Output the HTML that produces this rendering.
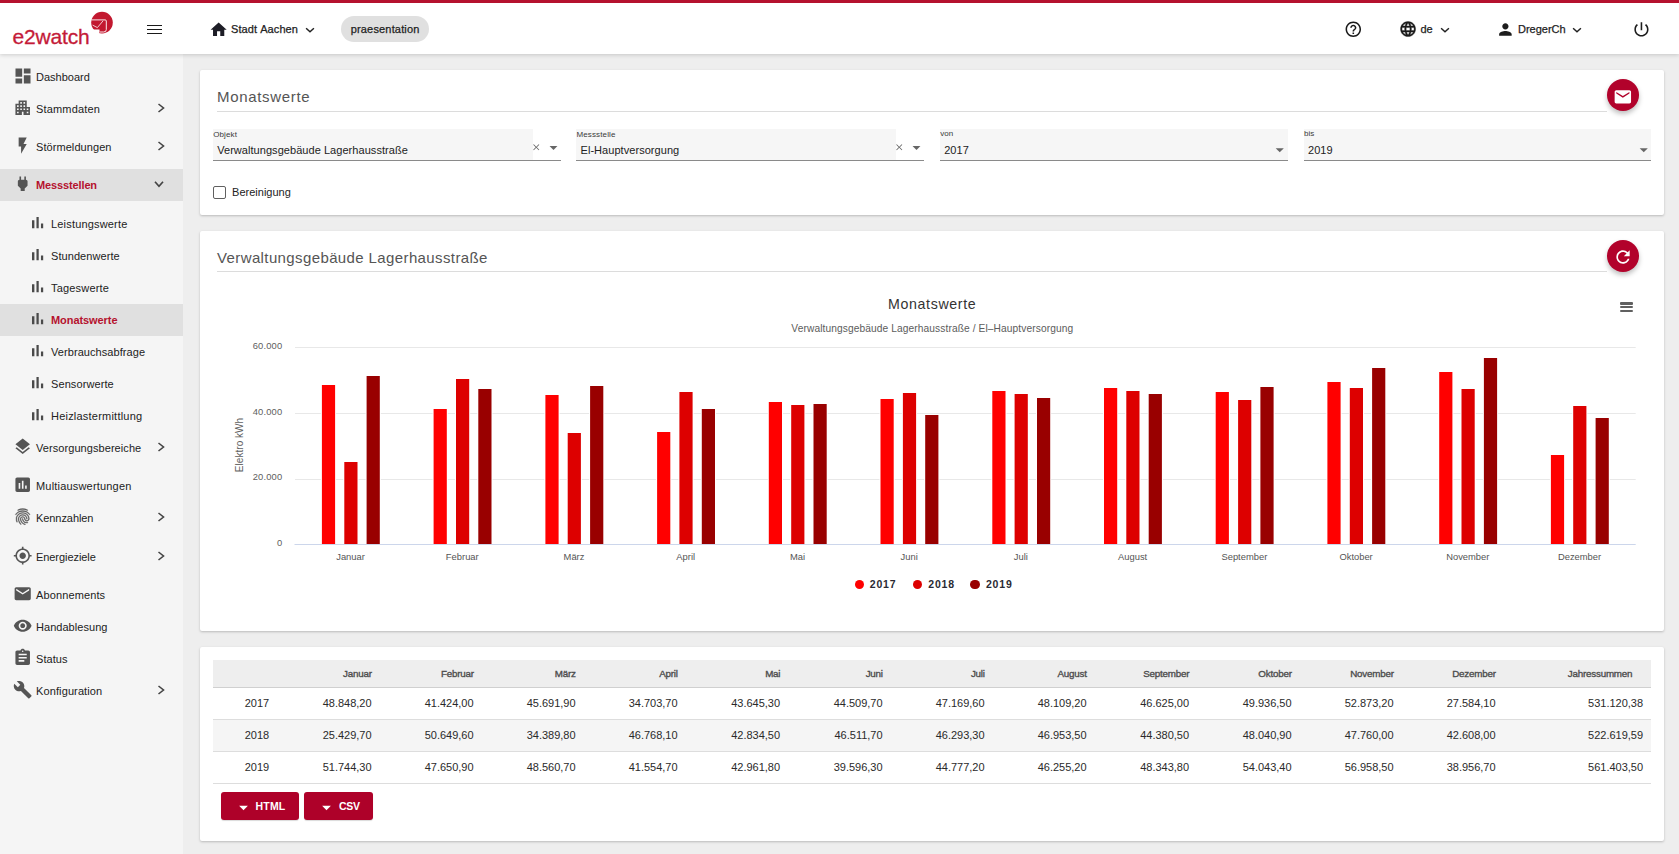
<!DOCTYPE html><html><head><meta charset="utf-8"><title>e2watch</title><style>
*{box-sizing:border-box;margin:0;padding:0}
html,body{width:1679px;height:854px;overflow:hidden;background:#eeeeee;font-family:"Liberation Sans",sans-serif;}
body{position:relative}
.ic{position:absolute;display:block;overflow:visible}
.abs{position:absolute}
/* .t: text whose baseline sits at "top" (line-height 0 trick) */
.t{position:absolute;white-space:nowrap;line-height:0;height:0;font-size:11px;color:#222}
.m{-webkit-text-stroke:0.25px currentColor}
.card{position:absolute;background:#fff;border-radius:2px;box-shadow:0 1px 3px rgba(0,0,0,.16),0 1px 2px rgba(0,0,0,.07)}
</style></head><body>
<div class="abs" style="left:0;top:54px;width:183.1px;height:800px;background:#f5f5f5"></div>
<div class="abs" style="left:0;top:169.3px;width:183.1px;height:31.4px;background:#e0e0e0"></div>
<div class="abs" style="left:0;top:304.3px;width:183.1px;height:31.4px;background:#e0e0e0"></div>
<svg class="ic" style="left:12.50px;top:65.50px;width:20.00px;height:20.00px;" viewBox="0 0 24 24"><path fill="#555555" d="M3 13h8V3H3v10zm0 8h8v-6H3v6zm10 0h8V11h-8v10zm0-18v6h8V3h-8z"/></svg>
<div class="t " style="left:36.00px;top:77.09px;font-size:11px;letter-spacing:0.000px;">Dashboard</div>
<svg class="ic" style="left:12.80px;top:97.80px;width:19.40px;height:19.40px;" viewBox="0 0 24 24"><path fill="#555555" d="M17 11V3H7v4H3v14h8v-4h2v4h8V11h-4zM7 19H5v-2h2v2zm0-4H5v-2h2v2zm0-4H5V9h2v2zm4 4H9v-2h2v2zm0-4H9V9h2v2zm0-4H9V5h2v2zm4 8h-2v-2h2v2zm0-4h-2V9h2v2zm0-4h-2V5h2v2zm4 12h-2v-2h2v2zm0-4h-2v-2h2v2z"/></svg>
<div class="t " style="left:36.00px;top:109.09px;font-size:11px;letter-spacing:0.160px;">Stammdaten</div>
<svg class="ic" style="left:152.80px;top:99.50px;width:16px;height:16px" viewBox="-8 -8 16 16"><path d="M-2.50 -4.00L2.50 0L-2.50 4.00" fill="none" stroke="#444" stroke-width="1.60"/></svg>
<svg class="ic" style="left:12.80px;top:135.80px;width:19.40px;height:19.40px;" viewBox="0 0 24 24"><path fill="#555555" d="M7 2v11h3v9l7-12h-4l4-8z"/></svg>
<div class="t " style="left:36.00px;top:147.09px;font-size:11px;letter-spacing:0.069px;">Störmeldungen</div>
<svg class="ic" style="left:152.80px;top:137.50px;width:16px;height:16px" viewBox="-8 -8 16 16"><path d="M-2.50 -4.00L2.50 0L-2.50 4.00" fill="none" stroke="#444" stroke-width="1.60"/></svg>
<svg class="ic" style="left:12.80px;top:173.80px;width:19.40px;height:19.40px;" viewBox="0 0 24 24"><path fill="#555555" d="M16.01 7L16 3h-2v4h-4V3H8v4h-.01C7 6.99 6 7.99 6 8.99v5.49L9.5 18v3h5v-3l3.5-3.51v-5.5c0-1-1-2-1.99-1.99z"/></svg>
<div class="t " style="left:36.00px;top:185.09px;font-size:11px;letter-spacing:-0.127px;font-weight:bold;color:#b5122e">Messstellen</div>
<svg class="ic" style="left:151.40px;top:175.60px;width:16px;height:16px" viewBox="-8 -8 16 16"><path d="M-4.00 -2.20L0 2.20L4.00 -2.20" fill="none" stroke="#444" stroke-width="1.70"/></svg>
<svg class="ic" style="left:12.80px;top:436.80px;width:19.40px;height:19.40px;" viewBox="0 0 24 24"><path fill="#555555" d="M11.99 18.54l-7.37-5.73L3 14.07l9 7 9-7-1.63-1.27-7.38 5.74zM12 16l7.36-5.73L21 9l-9-7-9 7 1.63 1.27L12 16z"/></svg>
<div class="t " style="left:36.00px;top:448.09px;font-size:11px;letter-spacing:0.068px;">Versorgungsbereiche</div>
<svg class="ic" style="left:152.80px;top:438.50px;width:16px;height:16px" viewBox="-8 -8 16 16"><path d="M-2.50 -4.00L2.50 0L-2.50 4.00" fill="none" stroke="#444" stroke-width="1.60"/></svg>
<svg class="ic" style="left:12.80px;top:474.80px;width:19.40px;height:19.40px;" viewBox="0 0 24 24"><path fill="#555555" d="M19 3H5c-1.1 0-2 .9-2 2v14c0 1.1.9 2 2 2h14c1.1 0 2-.9 2-2V5c0-1.1-.9-2-2-2zM9 17H7v-7h2v7zm4 0h-2V7h2v10zm4 0h-2v-4h2v4z"/></svg>
<div class="t " style="left:36.00px;top:486.09px;font-size:11px;letter-spacing:0.188px;">Multiauswertungen</div>
<svg class="ic" style="left:12.80px;top:506.80px;width:19.40px;height:19.40px;stroke:#555;stroke-width:.45px" viewBox="0 0 24 24"><path fill="#555555" d="M17.81 4.47c-.08 0-.16-.02-.23-.06C15.66 3.42 14 3 12.01 3c-1.98 0-3.86.47-5.57 1.41-.24.13-.54.04-.68-.2-.13-.24-.04-.55.2-.68C7.82 2.52 9.86 2 12.01 2c2.13 0 3.99.47 6.03 1.52.25.13.34.43.21.67-.09.18-.26.28-.44.28zM3.5 9.72c-.1 0-.2-.03-.29-.09-.23-.16-.28-.47-.12-.7.99-1.4 2.25-2.5 3.75-3.27C9.98 4.04 14 4.03 17.15 5.65c1.5.77 2.76 1.86 3.75 3.25.16.22.11.54-.12.7-.23.16-.54.11-.7-.12-.9-1.26-2.04-2.25-3.39-2.94-2.87-1.47-6.54-1.47-9.4.01-1.36.7-2.5 1.7-3.4 2.96-.08.14-.23.21-.39.21zm6.25 12.07c-.13 0-.26-.05-.35-.15-.87-.87-1.34-1.43-2.01-2.64-.69-1.23-1.05-2.73-1.05-4.34 0-2.97 2.54-5.39 5.66-5.39s5.66 2.42 5.66 5.39c0 .28-.22.5-.5.5s-.5-.22-.5-.5c0-2.42-2.09-4.39-4.66-4.39-2.57 0-4.66 1.97-4.66 4.39 0 1.44.32 2.77.93 3.85.64 1.15 1.08 1.64 1.85 2.42.19.2.19.51 0 .71-.11.1-.24.15-.37.15zm7.17-1.85c-1.19 0-2.24-.3-3.1-.89-1.49-1.01-2.38-2.65-2.38-4.39 0-.28.22-.5.5-.5s.5.22.5.5c0 1.41.72 2.74 1.94 3.56.71.48 1.54.71 2.54.71.24 0 .64-.03 1.04-.1.27-.05.53.13.58.41.05.27-.13.53-.41.58-.57.11-1.07.12-1.21.12zM14.91 22c-.04 0-.09-.01-.13-.02-1.59-.44-2.63-1.03-3.72-2.1-1.4-1.39-2.17-3.24-2.17-5.22 0-1.62 1.38-2.94 3.08-2.94 1.7 0 3.08 1.32 3.08 2.94 0 1.07.93 1.94 2.08 1.94s2.08-.87 2.08-1.94c0-3.77-3.25-6.83-7.25-6.83-2.84 0-5.44 1.58-6.61 4.03-.39.81-.59 1.76-.59 2.8 0 .78.07 2.01.67 3.61.1.26-.03.55-.29.64-.26.1-.55-.04-.64-.29-.49-1.31-.73-2.61-.73-3.96 0-1.2.23-2.29.68-3.24 1.33-2.79 4.28-4.6 7.51-4.6 4.55 0 8.25 3.51 8.25 7.83 0 1.62-1.38 2.94-3.08 2.94s-3.08-1.32-3.08-2.94c0-1.07-.93-1.94-2.08-1.94s-2.08.87-2.08 1.94c0 1.71.66 3.31 1.87 4.51.95.94 1.86 1.46 3.27 1.85.27.07.42.35.35.61-.05.23-.26.38-.47.38z"/></svg>
<div class="t " style="left:36.00px;top:518.09px;font-size:11px;letter-spacing:-0.070px;">Kennzahlen</div>
<svg class="ic" style="left:152.80px;top:508.50px;width:16px;height:16px" viewBox="-8 -8 16 16"><path d="M-2.50 -4.00L2.50 0L-2.50 4.00" fill="none" stroke="#444" stroke-width="1.60"/></svg>
<svg class="ic" style="left:12.80px;top:545.80px;width:19.40px;height:19.40px;" viewBox="0 0 24 24"><path fill="#555555" d="M12 8c-2.21 0-4 1.79-4 4s1.79 4 4 4 4-1.79 4-4-1.79-4-4-4zm8.94 3c-.46-4.17-3.77-7.48-7.94-7.94V1h-2v2.06C6.83 3.52 3.52 6.83 3.06 11H1v2h2.06c.46 4.17 3.77 7.48 7.94 7.94V23h2v-2.06c4.17-.46 7.48-3.77 7.94-7.94H23v-2h-2.06zM12 19c-3.87 0-7-3.13-7-7s3.13-7 7-7 7 3.13 7 7-3.13 7-7 7z"/></svg>
<div class="t " style="left:36.00px;top:557.09px;font-size:11px;letter-spacing:-0.067px;">Energieziele</div>
<svg class="ic" style="left:152.80px;top:547.50px;width:16px;height:16px" viewBox="-8 -8 16 16"><path d="M-2.50 -4.00L2.50 0L-2.50 4.00" fill="none" stroke="#444" stroke-width="1.60"/></svg>
<svg class="ic" style="left:12.80px;top:583.80px;width:19.40px;height:19.40px;" viewBox="0 0 24 24"><path fill="#555555" d="M20 4H4c-1.1 0-1.99.9-1.99 2L2 18c0 1.1.9 2 2 2h16c1.1 0 2-.9 2-2V6c0-1.1-.9-2-2-2zm0 4l-8 5-8-5V6l8 5 8-5v2z"/></svg>
<div class="t " style="left:36.00px;top:595.09px;font-size:11px;letter-spacing:0.118px;">Abonnements</div>
<svg class="ic" style="left:12.80px;top:615.80px;width:19.40px;height:19.40px;" viewBox="0 0 24 24"><path fill="#555555" d="M12 4.5C7 4.5 2.73 7.61 1 12c1.73 4.39 6 7.5 11 7.5s9.27-3.11 11-7.5c-1.73-4.39-6-7.5-11-7.5zM12 17c-2.76 0-5-2.24-5-5s2.24-5 5-5 5 2.24 5 5-2.24 5-5 5zm0-8c-1.66 0-3 1.34-3 3s1.34 3 3 3 3-1.34 3-3-1.34-3-3-3z"/></svg>
<div class="t " style="left:36.00px;top:627.09px;font-size:11px;letter-spacing:0.042px;">Handablesung</div>
<svg class="ic" style="left:12.80px;top:647.80px;width:19.40px;height:19.40px;" viewBox="0 0 24 24"><path fill="#555555" d="M19 3h-4.18C14.4 1.84 13.3 1 12 1c-1.3 0-2.4.84-2.82 2H5c-1.1 0-2 .9-2 2v14c0 1.1.9 2 2 2h14c1.1 0 2-.9 2-2V5c0-1.1-.9-2-2-2zm-7 0c.55 0 1 .45 1 1s-.45 1-1 1-1-.45-1-1 .45-1 1-1zm2 14H7v-2h7v2zm3-4H7v-2h10v2zm0-4H7V7h10v2z"/></svg>
<div class="t " style="left:36.00px;top:659.09px;font-size:11px;letter-spacing:0.050px;">Status</div>
<svg class="ic" style="left:12.80px;top:679.80px;width:19.40px;height:19.40px;" viewBox="0 0 24 24"><path fill="#555555" d="M22.7 19l-9.1-9.1c.9-2.3.4-5-1.5-6.9-2-2-5-2.4-7.4-1.3L9 6 6 9 1.6 4.7C.4 7.1.9 10.1 2.9 12.1c1.9 1.9 4.6 2.4 6.9 1.5l9.1 9.1c.4.4 1 .4 1.4 0l2.3-2.3c.5-.4.5-1.1.1-1.4z"/></svg>
<div class="t " style="left:36.00px;top:691.09px;font-size:11px;letter-spacing:0.115px;">Konfiguration</div>
<svg class="ic" style="left:152.80px;top:681.50px;width:16px;height:16px" viewBox="-8 -8 16 16"><path d="M-2.50 -4.00L2.50 0L-2.50 4.00" fill="none" stroke="#444" stroke-width="1.60"/></svg>
<svg class="ic" style="left:28.00px;top:212.70px;width:19.20px;height:19.20px;" viewBox="0 0 24 24"><path fill="#4a4a4a" d="M5 9.2h3V19H5zM10.6 5h2.8v14h-2.8zm5.6 8H19v6h-2.8z"/></svg>
<div class="t " style="left:51.00px;top:224.09px;font-size:11px;letter-spacing:0.179px;">Leistungswerte</div>
<svg class="ic" style="left:28.00px;top:244.70px;width:19.20px;height:19.20px;" viewBox="0 0 24 24"><path fill="#4a4a4a" d="M5 9.2h3V19H5zM10.6 5h2.8v14h-2.8zm5.6 8H19v6h-2.8z"/></svg>
<div class="t " style="left:51.00px;top:256.09px;font-size:11px;letter-spacing:0.067px;">Stundenwerte</div>
<svg class="ic" style="left:28.00px;top:276.70px;width:19.20px;height:19.20px;" viewBox="0 0 24 24"><path fill="#4a4a4a" d="M5 9.2h3V19H5zM10.6 5h2.8v14h-2.8zm5.6 8H19v6h-2.8z"/></svg>
<div class="t " style="left:51.00px;top:288.09px;font-size:11px;letter-spacing:0.190px;">Tageswerte</div>
<svg class="ic" style="left:28.00px;top:308.70px;width:19.20px;height:19.20px;" viewBox="0 0 24 24"><path fill="#4a4a4a" d="M5 9.2h3V19H5zM10.6 5h2.8v14h-2.8zm5.6 8H19v6h-2.8z"/></svg>
<div class="t " style="left:51.00px;top:320.09px;font-size:11px;letter-spacing:-0.073px;font-weight:bold;color:#b5122e">Monatswerte</div>
<svg class="ic" style="left:28.00px;top:340.70px;width:19.20px;height:19.20px;" viewBox="0 0 24 24"><path fill="#4a4a4a" d="M5 9.2h3V19H5zM10.6 5h2.8v14h-2.8zm5.6 8H19v6h-2.8z"/></svg>
<div class="t " style="left:51.00px;top:352.09px;font-size:11px;letter-spacing:0.071px;">Verbrauchsabfrage</div>
<svg class="ic" style="left:28.00px;top:372.70px;width:19.20px;height:19.20px;" viewBox="0 0 24 24"><path fill="#4a4a4a" d="M5 9.2h3V19H5zM10.6 5h2.8v14h-2.8zm5.6 8H19v6h-2.8z"/></svg>
<div class="t " style="left:51.00px;top:384.09px;font-size:11px;letter-spacing:0.091px;">Sensorwerte</div>
<svg class="ic" style="left:28.00px;top:404.70px;width:19.20px;height:19.20px;" viewBox="0 0 24 24"><path fill="#4a4a4a" d="M5 9.2h3V19H5zM10.6 5h2.8v14h-2.8zm5.6 8H19v6h-2.8z"/></svg>
<div class="t " style="left:51.00px;top:416.09px;font-size:11px;letter-spacing:0.217px;">Heizlastermittlung</div>
<div class="abs" style="left:0;top:0;width:1679px;height:54px;background:#fff;border-top:3px solid #b5122e;box-shadow:0 1px 4px rgba(0,0,0,.17)"></div>
<div class="t " style="left:12.60px;top:37.02px;font-size:21px;color:#c41a38;letter-spacing:-.2px;-webkit-text-stroke:.3px #c41a38">e2watch</div>
<svg class="ic" style="left:88px;top:8px;width:28px;height:28px" viewBox="88 8 28 28"><circle cx="102" cy="22.6" r="10.8" fill="#c2182f"/><path d="M91.3 19.9H105.2Q106.3 19.9 106.3 21V29.6Q106.3 32 103.6 32H99.8" fill="none" stroke="#fff" stroke-width="1" stroke-linecap="butt" opacity=".9"/><path d="M92.6 25.1L97.4 27.6L103.1 20.8" fill="none" stroke="#fff" stroke-width=".9" opacity=".85"/><path d="M89 29.4H99.5V32.4L97 34.5H89Z" fill="#fff"/></svg>
<div class="abs" style="left:147px;top:24.9px;width:15px;height:1.2px;background:#1a1a1a"></div>
<div class="abs" style="left:147px;top:29.1px;width:15px;height:1.2px;background:#1a1a1a"></div>
<div class="abs" style="left:147px;top:33.3px;width:15px;height:1.2px;background:#1a1a1a"></div>
<svg class="ic" style="left:208.95px;top:19.95px;width:19.30px;height:19.30px;" viewBox="0 0 24 24"><path fill="#1d1d26" d="M10 20v-6h4v6h5v-8h3L12 3 2 12h3v8z"/></svg>
<div class="t m" style="left:231.00px;top:29.09px;font-size:11px;color:#222;letter-spacing:.1px;word-spacing:.4px">Stadt Aachen</div>
<svg class="ic" style="left:302.30px;top:21.70px;width:16px;height:16px" viewBox="-8 -8 16 16"><path d="M-3.90 -1.75L0 1.75L3.90 -1.75" fill="none" stroke="#222" stroke-width="1.50"/></svg>
<div class="abs" style="left:341px;top:16px;width:88px;height:26px;border-radius:13px;background:#e0e0e0"></div>
<div class="t m" style="left:350.70px;top:29.09px;font-size:11px;color:#222;letter-spacing:.17px">praesentation</div>
<svg class="ic" style="left:1344.30px;top:20.10px;width:18.60px;height:18.60px;" viewBox="0 0 24 24"><path fill="#1a1a1a" d="M11 18h2v-2h-2v2zm1-16C6.48 2 2 6.48 2 12s4.48 10 10 10 10-4.48 10-10S17.52 2 12 2zm0 18c-4.41 0-8-3.59-8-8s3.59-8 8-8 8 3.59 8 8-3.59 8-8 8zm0-14c-2.21 0-4 1.79-4 4h2c0-1.1.9-2 2-2s2 .9 2 2c0 2-3 1.75-3 5h2c0-2.25 3-2.5 3-5 0-2.21-1.79-4-4-4z"/></svg>
<svg class="ic" style="left:1398.95px;top:20.45px;width:18.10px;height:18.10px;stroke:#1a1a1a;stroke-width:.5px" viewBox="0 0 24 24"><path fill="#1a1a1a" d="M11.99 2C6.47 2 2 6.48 2 12s4.47 10 9.99 10C17.52 22 22 17.52 22 12S17.52 2 11.99 2zm6.93 6h-2.95c-.32-1.25-.78-2.45-1.38-3.56 1.84.63 3.37 1.91 4.33 3.56zM12 4.04c.83 1.2 1.48 2.53 1.91 3.96h-3.82c.43-1.43 1.08-2.76 1.91-3.96zM4.26 14C4.1 13.36 4 12.69 4 12s.1-1.36.26-2h3.38c-.08.66-.14 1.32-.14 2 0 .68.06 1.34.14 2H4.26zm.82 2h2.95c.32 1.25.78 2.45 1.38 3.56-1.84-.63-3.37-1.9-4.33-3.56zm2.95-8H5.08c.96-1.66 2.49-2.93 4.33-3.56C8.81 5.55 8.35 6.75 8.03 8zM12 19.96c-.83-1.2-1.48-2.53-1.91-3.96h3.82c-.43 1.43-1.08 2.76-1.91 3.96zM14.34 14H9.66c-.09-.66-.16-1.32-.16-2 0-.68.07-1.35.16-2h4.68c.09.65.16 1.32.16 2 0 .68-.07 1.34-.16 2zm.25 5.56c.6-1.11 1.06-2.31 1.38-3.56h2.95c-.96 1.65-2.49 2.93-4.33 3.56zM16.36 14c.08-.66.14-1.32.14-2 0-.68-.06-1.34-.14-2h3.38c.16.64.26 1.31.26 2s-.1 1.36-.26 2h-3.38z"/></svg>
<div class="t m" style="left:1420.50px;top:29.09px;font-size:11px;color:#222">de</div>
<svg class="ic" style="left:1437.00px;top:21.70px;width:16px;height:16px" viewBox="-8 -8 16 16"><path d="M-3.90 -1.75L0 1.75L3.90 -1.75" fill="none" stroke="#222" stroke-width="1.50"/></svg>
<svg class="ic" style="left:1496.20px;top:20.20px;width:18.80px;height:18.80px;" viewBox="0 0 24 24"><path fill="#1d1d1d" d="M12 12c2.21 0 4-1.79 4-4s-1.79-4-4-4-4 1.79-4 4 1.79 4 4 4zm0 2c-2.67 0-8 1.34-8 4v2h16v-2c0-2.66-5.33-4-8-4z"/></svg>
<div class="t m" style="left:1518.00px;top:29.09px;font-size:11px;color:#222">DregerCh</div>
<svg class="ic" style="left:1569.40px;top:21.70px;width:16px;height:16px" viewBox="-8 -8 16 16"><path d="M-3.90 -1.75L0 1.75L3.90 -1.75" fill="none" stroke="#222" stroke-width="1.50"/></svg>
<svg class="ic" style="left:1631.95px;top:19.95px;width:18.90px;height:18.90px;" viewBox="0 0 24 24"><path fill="#1d1d1d" d="M13 3h-2v10h2V3zm4.83 2.17l-1.42 1.42C17.99 7.86 19 9.81 19 12c0 3.87-3.13 7-7 7s-7-3.13-7-7c0-2.19 1.01-4.14 2.58-5.42L6.17 5.17C4.23 6.82 3 9.26 3 12c0 4.97 4.03 9 9 9s9-4.03 9-9c0-2.74-1.23-5.18-3.17-6.83z"/></svg>
<div class="card" style="left:200px;top:70px;width:1464px;height:144.7px"></div>
<div class="t " style="left:217.00px;top:97.00px;font-size:15px;color:#555;letter-spacing:.68px">Monatswerte</div>
<div class="abs" style="left:217px;top:111px;width:1390px;height:1px;background:#dcdcdc"></div>
<div class="abs" style="left:213.0px;top:129px;width:347.5px;height:32px;background:#f6f6f6;border-bottom:1px solid #8a8a8a"></div>
<div class="t " style="left:213.20px;top:135.03px;font-size:8px;color:#3a3a3a;letter-spacing:.12px">Objekt</div>
<div class="t " style="left:217.20px;top:150.09px;font-size:11px;color:#222;letter-spacing:.05px">Verwaltungsgebäude Lagerhausstraße</div>
<div class="abs" style="left:532.5px;top:129px;width:28.2px;height:31px;background:#fff"></div>
<svg class="ic" style="left:530.75px;top:142.25px;width:10.50px;height:10.50px;" viewBox="0 0 24 24"><path fill="#666" d="M19 6.41L17.59 5 12 10.59 6.41 5 5 6.41 10.59 12 5 17.59 6.41 19 12 13.41 17.59 19 19 17.59 13.41 12z"/></svg>
<svg class="ic" style="left:543.50px;top:138.30px;width:19.00px;height:19.00px;" viewBox="0 0 24 24"><path fill="#666" d="M7 10l5 5 5-5z"/></svg>
<div class="abs" style="left:576.3px;top:129px;width:347.5px;height:32px;background:#f6f6f6;border-bottom:1px solid #8a8a8a"></div>
<div class="t " style="left:576.50px;top:135.03px;font-size:8px;color:#3a3a3a;letter-spacing:.12px">Messstelle</div>
<div class="t " style="left:580.50px;top:150.09px;font-size:11px;color:#222;letter-spacing:.05px">El-Hauptversorgung</div>
<div class="abs" style="left:895.8px;top:129px;width:28.2px;height:31px;background:#fff"></div>
<svg class="ic" style="left:894.05px;top:142.25px;width:10.50px;height:10.50px;" viewBox="0 0 24 24"><path fill="#666" d="M19 6.41L17.59 5 12 10.59 6.41 5 5 6.41 10.59 12 5 17.59 6.41 19 12 13.41 17.59 19 19 17.59 13.41 12z"/></svg>
<svg class="ic" style="left:906.80px;top:138.30px;width:19.00px;height:19.00px;" viewBox="0 0 24 24"><path fill="#666" d="M7 10l5 5 5-5z"/></svg>
<div class="abs" style="left:940.0px;top:129px;width:347.5px;height:32px;background:#f6f6f6;border-bottom:1px solid #8a8a8a"></div>
<div class="t " style="left:940.20px;top:134.03px;font-size:8px;color:#3a3a3a;letter-spacing:0">von</div>
<div class="t " style="left:944.20px;top:150.09px;font-size:11px;color:#222;letter-spacing:.05px">2017</div>
<svg class="ic" style="left:1270.15px;top:139.65px;width:19.50px;height:19.50px;" viewBox="0 0 24 24"><path fill="#666" d="M7 10l5 5 5-5z"/></svg>
<div class="abs" style="left:1303.8px;top:129px;width:347.5px;height:32px;background:#f6f6f6;border-bottom:1px solid #8a8a8a"></div>
<div class="t " style="left:1304.00px;top:134.03px;font-size:8px;color:#3a3a3a;letter-spacing:0">bis</div>
<div class="t " style="left:1308.00px;top:150.09px;font-size:11px;color:#222;letter-spacing:.05px">2019</div>
<svg class="ic" style="left:1633.95px;top:139.65px;width:19.50px;height:19.50px;" viewBox="0 0 24 24"><path fill="#666" d="M7 10l5 5 5-5z"/></svg>
<div class="abs" style="left:213px;top:186.2px;width:13.2px;height:12.5px;border:1px solid #606060;border-radius:2px;background:#fff"></div>
<div class="t " style="left:232.10px;top:192.09px;font-size:11px;color:#222">Bereinigung</div>
<div class="abs" style="left:1607.2px;top:79.3px;width:31.6px;height:31.6px;border-radius:16px;background:#b2022b;box-shadow:0 3px 5px rgba(0,0,0,.25)"></div>
<svg class="ic" style="left:1613.25px;top:86.75px;width:19.70px;height:19.70px;" viewBox="0 0 24 24"><path fill="#fff" d="M20 4H4c-1.1 0-1.99.9-1.99 2L2 18c0 1.1.9 2 2 2h16c1.1 0 2-.9 2-2V6c0-1.1-.9-2-2-2zm0 4l-8 5-8-5V6l8 5 8-5v2z"/></svg>
<div class="card" style="left:200px;top:231.2px;width:1464px;height:400px"></div>
<div class="t " style="left:217.00px;top:258.00px;font-size:15px;color:#555;letter-spacing:.385px">Verwaltungsgebäude Lagerhausstraße</div>
<div class="abs" style="left:217px;top:271px;width:1390px;height:1px;background:#dcdcdc"></div>
<div class="abs" style="left:1607.2px;top:239.9px;width:31.8px;height:31.8px;border-radius:16px;background:#b2022b;box-shadow:0 3px 5px rgba(0,0,0,.25)"></div>
<svg class="ic" style="left:1613.20px;top:247.40px;width:20.00px;height:20.00px;" viewBox="0 0 24 24"><path fill="#fff" d="M17.65 6.35C16.2 4.9 14.21 4 12 4c-4.42 0-7.99 3.58-7.99 8s3.57 8 7.99 8c3.73 0 6.84-2.55 7.73-6h-2.08c-.82 2.33-3.04 4-5.65 4-3.31 0-6-2.69-6-6s2.69-6 6-6c1.66 0 3.14.69 4.22 1.78L13 11h7V4l-2.35 2.35z"/></svg>
<svg class="ic" style="left:0;top:0;width:1679px;height:854px" viewBox="0 0 1679 854"><rect x="295.0" y="479" width="1340.7" height="1" fill="#e8e8e8"/><rect x="295.0" y="413" width="1340.7" height="1" fill="#e8e8e8"/><rect x="295.0" y="347" width="1340.7" height="1" fill="#e8e8e8"/><rect x="320.9" y="384" width="15.2" height="160" fill="#fff"/><rect x="321.9" y="385" width="13.2" height="159" fill="#ff0000"/><rect x="343.3" y="461" width="15.2" height="83" fill="#fff"/><rect x="344.3" y="462" width="13.2" height="82" fill="#dd0000"/><rect x="365.6" y="375" width="15.2" height="169" fill="#fff"/><rect x="366.6" y="376" width="13.2" height="168" fill="#990000"/><rect x="432.6" y="408" width="15.2" height="136" fill="#fff"/><rect x="433.6" y="409" width="13.2" height="135" fill="#ff0000"/><rect x="455.0" y="378" width="15.2" height="166" fill="#fff"/><rect x="456.0" y="379" width="13.2" height="165" fill="#dd0000"/><rect x="477.3" y="388" width="15.2" height="156" fill="#fff"/><rect x="478.3" y="389" width="13.2" height="155" fill="#990000"/><rect x="544.4" y="394" width="15.2" height="150" fill="#fff"/><rect x="545.4" y="395" width="13.2" height="149" fill="#ff0000"/><rect x="566.7" y="432" width="15.2" height="112" fill="#fff"/><rect x="567.7" y="433" width="13.2" height="111" fill="#dd0000"/><rect x="589.1" y="385" width="15.2" height="159" fill="#fff"/><rect x="590.1" y="386" width="13.2" height="158" fill="#990000"/><rect x="656.1" y="431" width="15.2" height="113" fill="#fff"/><rect x="657.1" y="432" width="13.2" height="112" fill="#ff0000"/><rect x="678.4" y="391" width="15.2" height="153" fill="#fff"/><rect x="679.4" y="392" width="13.2" height="152" fill="#dd0000"/><rect x="700.8" y="408" width="15.2" height="136" fill="#fff"/><rect x="701.8" y="409" width="13.2" height="135" fill="#990000"/><rect x="767.8" y="401" width="15.2" height="143" fill="#fff"/><rect x="768.8" y="402" width="13.2" height="142" fill="#ff0000"/><rect x="790.2" y="404" width="15.2" height="140" fill="#fff"/><rect x="791.2" y="405" width="13.2" height="139" fill="#dd0000"/><rect x="812.5" y="403" width="15.2" height="141" fill="#fff"/><rect x="813.5" y="404" width="13.2" height="140" fill="#990000"/><rect x="879.5" y="398" width="15.2" height="146" fill="#fff"/><rect x="880.5" y="399" width="13.2" height="145" fill="#ff0000"/><rect x="901.9" y="392" width="15.2" height="152" fill="#fff"/><rect x="902.9" y="393" width="13.2" height="151" fill="#dd0000"/><rect x="924.2" y="414" width="15.2" height="130" fill="#fff"/><rect x="925.2" y="415" width="13.2" height="129" fill="#990000"/><rect x="991.3" y="390" width="15.2" height="154" fill="#fff"/><rect x="992.3" y="391" width="13.2" height="153" fill="#ff0000"/><rect x="1013.6" y="393" width="15.2" height="151" fill="#fff"/><rect x="1014.6" y="394" width="13.2" height="150" fill="#dd0000"/><rect x="1036.0" y="397" width="15.2" height="147" fill="#fff"/><rect x="1037.0" y="398" width="13.2" height="146" fill="#990000"/><rect x="1103.0" y="387" width="15.2" height="157" fill="#fff"/><rect x="1104.0" y="388" width="13.2" height="156" fill="#ff0000"/><rect x="1125.3" y="390" width="15.2" height="154" fill="#fff"/><rect x="1126.3" y="391" width="13.2" height="153" fill="#dd0000"/><rect x="1147.7" y="393" width="15.2" height="151" fill="#fff"/><rect x="1148.7" y="394" width="13.2" height="150" fill="#990000"/><rect x="1214.7" y="391" width="15.2" height="153" fill="#fff"/><rect x="1215.7" y="392" width="13.2" height="152" fill="#ff0000"/><rect x="1237.1" y="399" width="15.2" height="145" fill="#fff"/><rect x="1238.1" y="400" width="13.2" height="144" fill="#dd0000"/><rect x="1259.4" y="386" width="15.2" height="158" fill="#fff"/><rect x="1260.4" y="387" width="13.2" height="157" fill="#990000"/><rect x="1326.4" y="381" width="15.2" height="163" fill="#fff"/><rect x="1327.4" y="382" width="13.2" height="162" fill="#ff0000"/><rect x="1348.8" y="387" width="15.2" height="157" fill="#fff"/><rect x="1349.8" y="388" width="13.2" height="156" fill="#dd0000"/><rect x="1371.1" y="367" width="15.2" height="177" fill="#fff"/><rect x="1372.1" y="368" width="13.2" height="176" fill="#990000"/><rect x="1438.2" y="371" width="15.2" height="173" fill="#fff"/><rect x="1439.2" y="372" width="13.2" height="172" fill="#ff0000"/><rect x="1460.5" y="388" width="15.2" height="156" fill="#fff"/><rect x="1461.5" y="389" width="13.2" height="155" fill="#dd0000"/><rect x="1482.9" y="357" width="15.2" height="187" fill="#fff"/><rect x="1483.9" y="358" width="13.2" height="186" fill="#990000"/><rect x="1549.9" y="454" width="15.2" height="90" fill="#fff"/><rect x="1550.9" y="455" width="13.2" height="89" fill="#ff0000"/><rect x="1572.2" y="405" width="15.2" height="139" fill="#fff"/><rect x="1573.2" y="406" width="13.2" height="138" fill="#dd0000"/><rect x="1594.6" y="417" width="15.2" height="127" fill="#fff"/><rect x="1595.6" y="418" width="13.2" height="126" fill="#990000"/><rect x="294.5" y="544" width="1341.2" height="1" fill="#ccd6eb"/></svg>
<div class="t " style="left:932.20px;transform:translateX(-50%);top:304.08px;font-size:14.2px;color:#333;letter-spacing:.65px">Monatswerte</div>
<div class="t " style="left:932.30px;transform:translateX(-50%);top:329.07px;font-size:10.2px;color:#5c5c5c;letter-spacing:.1px">Verwaltungsgebäude Lagerhausstraße / El–Hauptversorgung</div>
<div class="t " style="right:1396.70px;top:543.04px;font-size:9.4px;color:#606060;letter-spacing:.15px">0</div>
<div class="t " style="right:1396.70px;top:477.04px;font-size:9.4px;color:#606060;letter-spacing:.15px">20.000</div>
<div class="t " style="right:1396.70px;top:412.04px;font-size:9.4px;color:#606060;letter-spacing:.15px">40.000</div>
<div class="t " style="right:1396.70px;top:346.04px;font-size:9.4px;color:#606060;letter-spacing:.15px">60.000</div>
<div class="t " style="left:350.56px;transform:translateX(-50%);top:557.04px;font-size:9.4px;color:#555">Januar</div>
<div class="t " style="left:462.29px;transform:translateX(-50%);top:557.04px;font-size:9.4px;color:#555">Februar</div>
<div class="t " style="left:574.01px;transform:translateX(-50%);top:557.04px;font-size:9.4px;color:#555">März</div>
<div class="t " style="left:685.74px;transform:translateX(-50%);top:557.04px;font-size:9.4px;color:#555">April</div>
<div class="t " style="left:797.46px;transform:translateX(-50%);top:557.04px;font-size:9.4px;color:#555">Mai</div>
<div class="t " style="left:909.19px;transform:translateX(-50%);top:557.04px;font-size:9.4px;color:#555">Juni</div>
<div class="t " style="left:1020.91px;transform:translateX(-50%);top:557.04px;font-size:9.4px;color:#555">Juli</div>
<div class="t " style="left:1132.64px;transform:translateX(-50%);top:557.04px;font-size:9.4px;color:#555">August</div>
<div class="t " style="left:1244.36px;transform:translateX(-50%);top:557.04px;font-size:9.4px;color:#555">September</div>
<div class="t " style="left:1356.09px;transform:translateX(-50%);top:557.04px;font-size:9.4px;color:#555">Oktober</div>
<div class="t " style="left:1467.81px;transform:translateX(-50%);top:557.04px;font-size:9.4px;color:#555">November</div>
<div class="t " style="left:1579.54px;transform:translateX(-50%);top:557.04px;font-size:9.4px;color:#555">Dezember</div>
<div class="t" style="left:239.7px;top:445.4px;font-size:10px;letter-spacing:.05px;color:#606060;transform:translate(-50%,0) rotate(-90deg);transform-origin:50% 0">Elektro kWh</div>
<div class="abs" style="left:854.7px;top:579.5px;width:9.4px;height:9.4px;border-radius:5px;background:#ff0000"></div>
<div class="t " style="left:869.70px;top:584.06px;font-size:10.5px;color:#2a2a33;font-weight:bold;letter-spacing:.85px">2017</div>
<div class="abs" style="left:912.5px;top:579.5px;width:9.4px;height:9.4px;border-radius:5px;background:#dd0000"></div>
<div class="t " style="left:928.20px;top:584.06px;font-size:10.5px;color:#2a2a33;font-weight:bold;letter-spacing:.85px">2018</div>
<div class="abs" style="left:970.4px;top:579.5px;width:9.4px;height:9.4px;border-radius:5px;background:#990000"></div>
<div class="t " style="left:985.90px;top:584.06px;font-size:10.5px;color:#2a2a33;font-weight:bold;letter-spacing:.85px">2019</div>
<div class="abs" style="left:1620px;top:302.40px;width:13px;height:2.3px;background:#606060;border-radius:1px"></div>
<div class="abs" style="left:1620px;top:306.15px;width:13px;height:2.3px;background:#606060;border-radius:1px"></div>
<div class="abs" style="left:1620px;top:309.90px;width:13px;height:2.3px;background:#606060;border-radius:1px"></div>
<div class="card" style="left:200px;top:646.7px;width:1464px;height:193.9px"></div>
<div class="abs" style="left:213px;top:660px;width:1438px;height:27px;background:#eeeeee"></div>
<div class="abs" style="left:213px;top:720px;width:1438px;height:31px;background:#f5f5f5"></div>
<div class="abs" style="left:213px;top:687px;width:1438px;height:1px;background:#d0d0d0"></div>
<div class="abs" style="left:213px;top:719px;width:1438px;height:1px;background:#dddddd"></div>
<div class="abs" style="left:213px;top:751px;width:1438px;height:1px;background:#dddddd"></div>
<div class="abs" style="left:213px;top:783px;width:1438px;height:1px;background:#dddddd"></div>
<div class="t " style="right:1307.20px;top:674.00px;font-size:9.8px;color:#4c4c4c;letter-spacing:-.2px;-webkit-text-stroke:.33px #4c4c4c">Januar</div>
<div class="t " style="right:1205.20px;top:674.00px;font-size:9.8px;color:#4c4c4c;letter-spacing:-.2px;-webkit-text-stroke:.33px #4c4c4c">Februar</div>
<div class="t " style="right:1103.20px;top:674.00px;font-size:9.8px;color:#4c4c4c;letter-spacing:-.2px;-webkit-text-stroke:.33px #4c4c4c">März</div>
<div class="t " style="right:1001.20px;top:674.00px;font-size:9.8px;color:#4c4c4c;letter-spacing:-.2px;-webkit-text-stroke:.33px #4c4c4c">April</div>
<div class="t " style="right:898.70px;top:674.00px;font-size:9.8px;color:#4c4c4c;letter-spacing:-.2px;-webkit-text-stroke:.33px #4c4c4c">Mai</div>
<div class="t " style="right:796.20px;top:674.00px;font-size:9.8px;color:#4c4c4c;letter-spacing:-.2px;-webkit-text-stroke:.33px #4c4c4c">Juni</div>
<div class="t " style="right:694.20px;top:674.00px;font-size:9.8px;color:#4c4c4c;letter-spacing:-.2px;-webkit-text-stroke:.33px #4c4c4c">Juli</div>
<div class="t " style="right:592.20px;top:674.00px;font-size:9.8px;color:#4c4c4c;letter-spacing:-.2px;-webkit-text-stroke:.33px #4c4c4c">August</div>
<div class="t " style="right:489.70px;top:674.00px;font-size:9.8px;color:#4c4c4c;letter-spacing:-.2px;-webkit-text-stroke:.33px #4c4c4c">September</div>
<div class="t " style="right:387.20px;top:674.00px;font-size:9.8px;color:#4c4c4c;letter-spacing:-.2px;-webkit-text-stroke:.33px #4c4c4c">Oktober</div>
<div class="t " style="right:285.20px;top:674.00px;font-size:9.8px;color:#4c4c4c;letter-spacing:-.2px;-webkit-text-stroke:.33px #4c4c4c">November</div>
<div class="t " style="right:183.20px;top:674.00px;font-size:9.8px;color:#4c4c4c;letter-spacing:-.2px;-webkit-text-stroke:.33px #4c4c4c">Dezember</div>
<div class="t " style="right:46.70px;top:674.00px;font-size:9.8px;color:#4c4c4c;letter-spacing:-.2px;-webkit-text-stroke:.33px #4c4c4c">Jahressummen</div>
<div class="t " style="left:244.70px;top:703.09px;font-size:11px;color:#2a2a2a">2017</div>
<div class="t " style="right:1307.40px;top:703.09px;font-size:11px;color:#2a2a2a">48.848,20</div>
<div class="t " style="right:1205.40px;top:703.09px;font-size:11px;color:#2a2a2a">41.424,00</div>
<div class="t " style="right:1103.40px;top:703.09px;font-size:11px;color:#2a2a2a">45.691,90</div>
<div class="t " style="right:1001.40px;top:703.09px;font-size:11px;color:#2a2a2a">34.703,70</div>
<div class="t " style="right:898.90px;top:703.09px;font-size:11px;color:#2a2a2a">43.645,30</div>
<div class="t " style="right:796.40px;top:703.09px;font-size:11px;color:#2a2a2a">44.509,70</div>
<div class="t " style="right:694.40px;top:703.09px;font-size:11px;color:#2a2a2a">47.169,60</div>
<div class="t " style="right:592.40px;top:703.09px;font-size:11px;color:#2a2a2a">48.109,20</div>
<div class="t " style="right:489.90px;top:703.09px;font-size:11px;color:#2a2a2a">46.625,00</div>
<div class="t " style="right:387.40px;top:703.09px;font-size:11px;color:#2a2a2a">49.936,50</div>
<div class="t " style="right:285.40px;top:703.09px;font-size:11px;color:#2a2a2a">52.873,20</div>
<div class="t " style="right:183.40px;top:703.09px;font-size:11px;color:#2a2a2a">27.584,10</div>
<div class="t " style="right:35.90px;top:703.09px;font-size:11px;color:#2a2a2a">531.120,38</div>
<div class="t " style="left:244.70px;top:735.09px;font-size:11px;color:#2a2a2a">2018</div>
<div class="t " style="right:1307.40px;top:735.09px;font-size:11px;color:#2a2a2a">25.429,70</div>
<div class="t " style="right:1205.40px;top:735.09px;font-size:11px;color:#2a2a2a">50.649,60</div>
<div class="t " style="right:1103.40px;top:735.09px;font-size:11px;color:#2a2a2a">34.389,80</div>
<div class="t " style="right:1001.40px;top:735.09px;font-size:11px;color:#2a2a2a">46.768,10</div>
<div class="t " style="right:898.90px;top:735.09px;font-size:11px;color:#2a2a2a">42.834,50</div>
<div class="t " style="right:796.40px;top:735.09px;font-size:11px;color:#2a2a2a">46.511,70</div>
<div class="t " style="right:694.40px;top:735.09px;font-size:11px;color:#2a2a2a">46.293,30</div>
<div class="t " style="right:592.40px;top:735.09px;font-size:11px;color:#2a2a2a">46.953,50</div>
<div class="t " style="right:489.90px;top:735.09px;font-size:11px;color:#2a2a2a">44.380,50</div>
<div class="t " style="right:387.40px;top:735.09px;font-size:11px;color:#2a2a2a">48.040,90</div>
<div class="t " style="right:285.40px;top:735.09px;font-size:11px;color:#2a2a2a">47.760,00</div>
<div class="t " style="right:183.40px;top:735.09px;font-size:11px;color:#2a2a2a">42.608,00</div>
<div class="t " style="right:35.90px;top:735.09px;font-size:11px;color:#2a2a2a">522.619,59</div>
<div class="t " style="left:244.70px;top:767.09px;font-size:11px;color:#2a2a2a">2019</div>
<div class="t " style="right:1307.40px;top:767.09px;font-size:11px;color:#2a2a2a">51.744,30</div>
<div class="t " style="right:1205.40px;top:767.09px;font-size:11px;color:#2a2a2a">47.650,90</div>
<div class="t " style="right:1103.40px;top:767.09px;font-size:11px;color:#2a2a2a">48.560,70</div>
<div class="t " style="right:1001.40px;top:767.09px;font-size:11px;color:#2a2a2a">41.554,70</div>
<div class="t " style="right:898.90px;top:767.09px;font-size:11px;color:#2a2a2a">42.961,80</div>
<div class="t " style="right:796.40px;top:767.09px;font-size:11px;color:#2a2a2a">39.596,30</div>
<div class="t " style="right:694.40px;top:767.09px;font-size:11px;color:#2a2a2a">44.777,20</div>
<div class="t " style="right:592.40px;top:767.09px;font-size:11px;color:#2a2a2a">46.255,20</div>
<div class="t " style="right:489.90px;top:767.09px;font-size:11px;color:#2a2a2a">48.343,80</div>
<div class="t " style="right:387.40px;top:767.09px;font-size:11px;color:#2a2a2a">54.043,40</div>
<div class="t " style="right:285.40px;top:767.09px;font-size:11px;color:#2a2a2a">56.958,50</div>
<div class="t " style="right:183.40px;top:767.09px;font-size:11px;color:#2a2a2a">38.956,70</div>
<div class="t " style="right:35.90px;top:767.09px;font-size:11px;color:#2a2a2a">561.403,50</div>
<div class="abs" style="left:221.1px;top:792px;width:77.6px;height:28px;border-radius:3px;background:#ae0129;box-shadow:0 1px 1px rgba(0,0,0,.15)"></div>
<svg class="ic" style="left:232.75px;top:796.60px;width:21.00px;height:21.00px;" viewBox="0 0 24 24"><path fill="#fff" d="M7 10l5 5 5-5z"/></svg>
<div class="t " style="left:255.50px;top:806.06px;font-size:10.5px;color:#fff;font-weight:bold;letter-spacing:.2px">HTML</div>
<div class="abs" style="left:304.1px;top:792px;width:68.9px;height:28px;border-radius:3px;background:#ae0129;box-shadow:0 1px 1px rgba(0,0,0,.15)"></div>
<svg class="ic" style="left:316.20px;top:796.60px;width:21.00px;height:21.00px;" viewBox="0 0 24 24"><path fill="#fff" d="M7 10l5 5 5-5z"/></svg>
<div class="t " style="left:338.90px;top:806.06px;font-size:10.5px;color:#fff;font-weight:bold;letter-spacing:-.3px">CSV</div>
</body></html>
